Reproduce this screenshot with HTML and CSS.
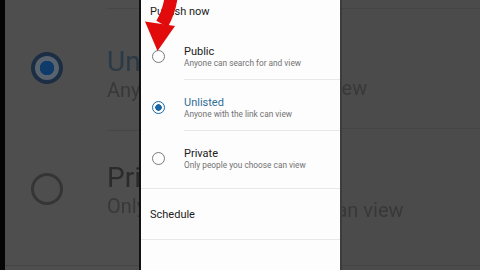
FILE: index.html
```html
<!DOCTYPE html>
<html lang="en">
<head>
    <meta charset="UTF-8">
    <title>Visibility</title>
    <meta name="viewport" content="width=device-width, initial-scale=1.0">
    <link rel="stylesheet" href="styles.css">
</head>
<body>
    <main class="frame">
        <!-- zoomed, dimmed copy of the screen behind the short -->
        <aside class="ghost ghost-left">
            <div class="ghost-row ghost-row--first">
                <span class="ghost-radio on"></span>
                <div class="ghost-text">
                    <div class="ghost-title blue">Unlisted</div>
                    <div class="ghost-sub">Anyone with the link can view</div>
                </div>
            </div>
            <div class="ghost-row ghost-row--second">
                <span class="ghost-radio"></span>
                <div class="ghost-text">
                    <div class="ghost-title">Private</div>
                    <div class="ghost-sub">Only people you choose can view</div>
                </div>
            </div>
            <div class="ghost-end"></div>
        </aside>

        <section class="screen">
            <div class="screen-title">Publish now</div>

            <div class="options">
                <div class="option">
                    <span class="radio"></span>
                    <div class="option-text">
                        <div class="option-title">Public</div>
                        <div class="option-sub">Anyone can search for and view</div>
                    </div>
                </div>
                <div class="option">
                    <span class="radio on"></span>
                    <div class="option-text">
                        <div class="option-title blue">Unlisted</div>
                        <div class="option-sub">Anyone with the link can view</div>
                    </div>
                </div>
                <div class="option option--last">
                    <span class="radio"></span>
                    <div class="option-text">
                        <div class="option-title">Private</div>
                        <div class="option-sub">Only people you choose can view</div>
                    </div>
                </div>
            </div>

            <div class="schedule">Schedule</div>

            <svg class="arrow" width="40" height="56" viewBox="0 0 40 56">
                <path d="M30 -2 Q28 12 21 24" fill="none" stroke="#e10b0b" stroke-width="13"/>
                <polygon points="4,21.5 34,26 16.5,51" fill="#e10b0b"/>
            </svg>
        </section>

        <aside class="ghost ghost-right">
            <div class="ghost-row ghost-row--r1">
                <div class="ghost-clip">
                    <div class="ghost-sub cut-view">view</div>
                </div>
            </div>
            <div class="ghost-row ghost-row--r2">
                <div class="ghost-clip">
                    <div class="ghost-sub cut-can">can view</div>
                </div>
            </div>
            <div class="ghost-end"></div>
        </aside>
    </main>
</body>
</html>
```

FILE: styles.css
```css
body {
    margin: 0;
    background: #000;
    font-family: Roboto, 'Noto Sans', sans-serif;
}

.frame {
    display: flex;
    width: 480px;
    height: 270px;
    overflow: hidden;
}

/* side panels */
.ghost {
    background: #4e4e4e;
    overflow: hidden;
    padding-top: 8px;
    box-sizing: border-box;
    display: flex;
    flex-direction: column;
    filter: blur(0.5px);
}
.ghost-left {
    width: 139px;
    border-left: 5px solid #050505;
}
.ghost-right {
    width: 140px;
    background: #4b4b4b;
    border-left: 2px solid #3c3c3c;
}

.ghost-row {
    display: flex;
    align-items: flex-start;
    white-space: nowrap;
}
.ghost-row--first { height: 122px; }
.ghost-row--second { height: 135px; }
.ghost-row--r1 {
    height: 120px;
    border-top: 1px solid #444;
    box-sizing: border-box;
    padding-top: 67px;
}
.ghost-row--r2 {
    height: 137px;
    border-top: 1px solid #444;
    box-sizing: border-box;
    padding-top: 69px;
}
.ghost-end {
    border-top: 1px solid #444;
}

.ghost-radio {
    flex: none;
    width: 32px;
    height: 32px;
    margin-left: 26px;
    margin-top: 43px;
    border-radius: 50%;
    border: 3px solid #353535;
    box-sizing: border-box;
}
.ghost-row--first .ghost-radio { margin-top: 44px; }
.ghost-radio.on {
    border: 4px solid #1c2e43;
    background: radial-gradient(circle, #0f3b6a 7px, #59636e 7.5px);
}

.ghost-text {
    flex: 1;
    min-width: 0;
    overflow: hidden;
    margin-left: 44px;
    align-self: stretch;
    border-top: 1px solid #464646;
    padding-top: 31px;
}
.ghost-row--first .ghost-text { padding-top: 37px; }

.ghost-clip {
    width: 100%;
    overflow: hidden;
}

.ghost-title {
    font-size: 28px;
    line-height: 32px;
    color: #2b2b2b;
}
.ghost-title.blue { color: #2a3a46; }
.ghost-sub {
    font-size: 20px;
    line-height: 24px;
    color: #383838;
}
.cut-view { margin-left: -15px; }
.cut-can { margin-left: -16px; }

/* phone screen */
.screen {
    position: relative;
    width: 201px;
    box-sizing: border-box;
    border-left: 2px solid #111;
    background: #fdfdfd;
    display: flex;
    flex-direction: column;
}

.screen-title {
    height: 29px;
    box-sizing: border-box;
    padding: 5px 0 0 9px;
    font-size: 11px;
    line-height: 13px;
    color: #212121;
}

.options {
    border-bottom: 1px solid #e8e8e8;
}
.option {
    display: flex;
    align-items: flex-start;
    height: 51px;
    padding-left: 11px;
}
.option--last { height: 57px; }

.radio {
    flex: none;
    width: 13px;
    height: 13px;
    margin-top: 21px;
    border-radius: 50%;
    border: 1.5px solid #7a7a7a;
    box-sizing: border-box;
}
.radio.on {
    border-color: #1a67a6;
    background: radial-gradient(circle, #1a67a6 3px, transparent 3.5px);
}

.option-text {
    flex: 1;
    align-self: stretch;
    margin-left: 19px;
    padding-top: 16px;
    border-bottom: 1px solid #e8e8e8;
    box-sizing: border-box;
}
.option--last .option-text { border-bottom: none; }

.option-title {
    font-size: 11px;
    line-height: 13px;
    color: #202020;
}
.option-title.blue { color: #2f6e96; }
.option-sub {
    font-size: 8.3px;
    line-height: 10px;
    color: #727272;
}

.schedule {
    height: 51px;
    box-sizing: border-box;
    border-bottom: 1px solid #e8e8e8;
    padding-left: 9px;
    font-size: 11px;
    line-height: 51px;
    color: #212121;
}

.arrow {
    position: absolute;
    top: 0;
    left: 0;
}
```
